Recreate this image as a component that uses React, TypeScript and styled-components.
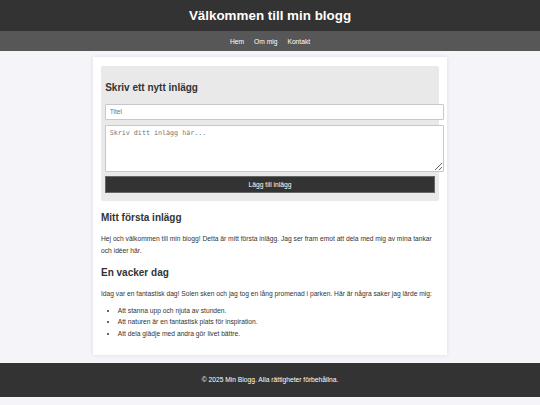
import React from 'react';
import styled, {createGlobalStyle} from 'styled-components';

const GlobalStyle = createGlobalStyle`
  html, body {
    background-color: #f4f4f9;
    color: #333;
    font-family: "Liberation Sans", Arial, sans-serif;
    font-size: 6.7px;
    margin: 0;
    padding: 0;
  }

  * {
    box-sizing: content-box;
  }
`;

const Header = styled.header`
  align-items: center;
  background-color: #333;
  display: flex;
  height: 31px;
  justify-content: center;
`;

const Title = styled.h1`
  color: #fff;
  font-size: 13.4px;
  font-weight: bold;
  line-height: 15px;
  margin: 0;
`;

const Nav = styled.nav`
  align-items: center;
  background-color: #575757;
  display: flex;
  gap: 10px;
  height: 20px;
  justify-content: center;
`;

const NavLink = styled.a`
  color: #fff;
  font-size: 6.7px;
  text-decoration: none;
`;

const Main = styled.main`
  background-color: #fff;
  box-shadow: 0 0 4px rgba(0, 0, 0, .1);
  margin: 6.3px auto 8.7px;
  padding: 8.4px;
  width: 338px;
`;

const PostForm = styled.form`
  background-color: #e9e9e9;
  border-radius: 2px;
  margin-bottom: 9.6px;
  padding: 4.2px;
`;

const FormTitle = styled.h2`
  font-size: 10px;
  line-height: 15px;
  margin: 9.8px 0 9px;
`;

const Field = styled.input`
  background-color: #fff;
  border: 1px solid #c8c8c8;
  border-radius: 1px;
  color: #333;
  display: block;
  font-family: "Liberation Sans", Arial, sans-serif;
  font-size: 6.7px;
  height: 7.7px;
  line-height: 7.7px;
  margin: 0 0 5px;
  padding: 3.3px 3.5px;
  width: 100%;

  ::placeholder {
    color: #777;
  }
`;

const TextArea = styled.textarea`
  background-color: #fff;
  border: 1px solid #c8c8c8;
  border-radius: 1px;
  color: #333;
  display: block;
  font-family: "DejaVu Sans Mono", "Liberation Mono", monospace;
  font-size: 6.7px;
  height: 38px;
  line-height: 9px;
  margin: 0 0 4px;
  padding: 3.5px 3.5px;
  width: 100%;

  ::placeholder {
    color: #999;
  }
`;

const SubmitButton = styled.button`
  background-color: #333;
  border: 1px solid #666;
  box-sizing: border-box;
  color: #fff;
  cursor: pointer;
  display: block;
  font-family: "Liberation Sans", Arial, sans-serif;
  font-size: 6.7px;
  height: 17px;
  margin: 0 0 3.4px;
  padding: 0;
  width: 100%;
`;

const PostTitle = styled.h2`
  font-size: 10px;
  line-height: 15px;
  margin: 8.3px 0;
`;

const Paragraph = styled.p`
  font-size: 6.7px;
  line-height: 11.5px;
  margin: 5px 0;
`;

const List = styled.ul`
  list-style: disc;
  margin: 5px 0 6.7px;
  padding-left: 16.8px;
`;

const ListItem = styled.li`
  font-size: 6.7px;
  line-height: 11.7px;
`;

const Footer = styled.footer`
  background-color: #333;
  color: #fff;
  font-size: 6.7px;
  line-height: 11.7px;
  padding: 11px 0;
  text-align: center;
`;

const lessons = [
  'Att stanna upp och njuta av stunden.',
  'Att naturen är en fantastisk plats för inspiration.',
  'Att dela glädje med andra gör livet bättre.',
];

export default function App () {
  return (
    <>
      <GlobalStyle />

      <Header>
        <Title>Välkommen till min blogg</Title>
      </Header>

      <Nav>
        <NavLink href="#">Hem</NavLink>
        <NavLink href="#">Om mig</NavLink>
        <NavLink href="#">Kontakt</NavLink>
      </Nav>

      <Main>
        <PostForm onSubmit={(event) => event.preventDefault()}>
          <FormTitle>Skriv ett nytt inlägg</FormTitle>
          <Field type="text" placeholder="Titel" />
          <TextArea placeholder="Skriv ditt inlägg här..." />
          <SubmitButton type="submit">Lägg till inlägg</SubmitButton>
        </PostForm>

        <article>
          <PostTitle>Mitt första inlägg</PostTitle>
          <Paragraph>
            Hej och välkommen till min blogg! Detta är mitt första inlägg. Jag ser fram emot att dela med mig av mina tankar och idéer här.
          </Paragraph>
        </article>

        <article>
          <PostTitle>En vacker dag</PostTitle>
          <Paragraph>
            Idag var en fantastisk dag! Solen sken och jag tog en lång promenad i parken. Här är några saker jag lärde mig:
          </Paragraph>
          <List>
            {lessons.map((lesson) => (
              <ListItem key={lesson}>{lesson}</ListItem>
            ))}
          </List>
        </article>
      </Main>

      <Footer>© 2025 Min Blogg. Alla rättigheter förbehållna.</Footer>
    </>
  );
}
